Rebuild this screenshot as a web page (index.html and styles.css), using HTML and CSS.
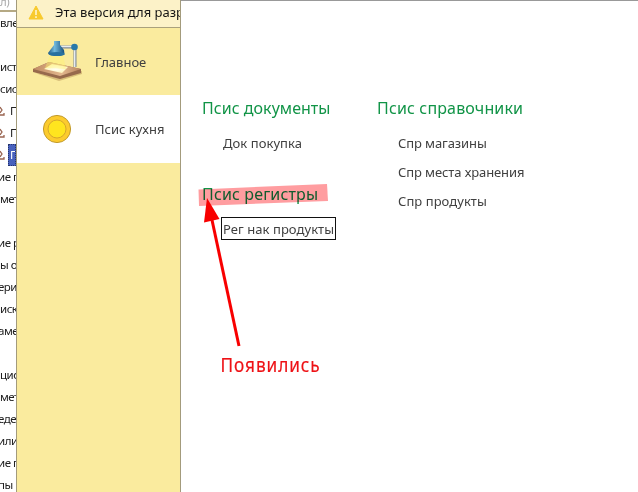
FILE: index.html
```html
<!DOCTYPE html>
<html lang="ru">
<head>
<meta charset="utf-8">
<title>Псис кухня</title>
<link rel="stylesheet" href="styles.css">
</head>
<body>
<div class="app">
  <aside class="tree">
    <div class="tree-head">л)</div>
    <div class="row">вле</div>
    <div class="row"></div>
    <div class="row">исте</div>
    <div class="row">сист</div>
    <div class="row leaf"><svg class="mark" viewBox="0 0 5 12"><path d="M0 2L2 5L0 8M0 10H4V8"/></svg><span>П</span></div>
    <div class="row leaf"><svg class="mark" viewBox="0 0 5 12"><path d="M0 2L2 5L0 8M0 10H4V8"/></svg><span>П</span></div>
    <div class="row leaf selected"><svg class="mark" viewBox="0 0 5 12"><path d="M0 2L2 5L0 8M0 10H4V8"/></svg><span>П</span></div>
    <div class="row cut">ие п</div>
    <div class="row">мет</div>
    <div class="row"></div>
    <div class="row cut">ие р</div>
    <div class="row">ы о</div>
    <div class="row cut">ери</div>
    <div class="row">иск</div>
    <div class="row cut">аме</div>
    <div class="row"></div>
    <div class="row">цио</div>
    <div class="row">мет</div>
    <div class="row cut">едел</div>
    <div class="row cut">или</div>
    <div class="row cut">ие п</div>
    <div class="row cut">пы</div>
  </aside>
  <nav class="nav">
    <div class="notice">
      <svg class="warn" viewBox="0 0 16 15"><path d="M8 1L15 14H1Z" fill="#f8ca2e" stroke="#f8ca2e" stroke-linejoin="round"/><path d="M8 5V10M8 11.3V13" stroke="#fff8d8" stroke-width="1.5"/></svg>
      <span>Эта версия для разработки</span>
    </div>
    <div class="section">
      <svg class="lamp" viewBox="0 0 52 42">
        <defs>
          <linearGradient id="shade"><stop offset="0" stop-color="#1b5785"/><stop offset=".4" stop-color="#71b9dc"/><stop offset="1" stop-color="#154e7d"/></linearGradient>
          <linearGradient id="wood"><stop offset="0" stop-color="#c08b63"/><stop offset=".6" stop-color="#e2b78d"/><stop offset="1" stop-color="#b98660"/></linearGradient>
          <radialGradient id="glow"><stop offset="0" stop-color="#fff"/><stop offset="1" stop-color="#fff6bd"/></radialGradient>
        </defs>
        <path d="M3 33L27 41L50 34V31L28 38Z" fill="#c9ab69" opacity=".7"/>
        <path d="M1 29L17 22L49 29V33L28 39L1 32Z" fill="#976a4c"/>
        <path d="M1 29L17 22L49 29L28 36Z" fill="url(#wood)"/>
        <path d="M12 29L20 24L36 27L30 33Z" fill="url(#glow)"/>
        <path d="M18 15L13 28L34 29L31 15Z" fill="#fff36b" opacity=".4"/>
        <path d="M27 7H42M43 9V27" fill="none" stroke="#7f8995" stroke-width="3"/>
        <path d="M28 6.500H42M42.700 9V27" fill="none" stroke="#e8edf0" stroke-width="1.400"/>
        <path d="M22 1H28V5L32 10Q34 16 25 16Q16 16 16 13L22 5Z" fill="url(#shade)"/>
        <ellipse cx="25" cy="14" rx="8" ry="2" fill="#28719f"/>
        <circle cx="42.500" cy="7" r="3.300" fill="#2879a9"/>
      </svg>
      <span>Главное</span>
    </div>
    <div class="section active">
      <svg class="coin" viewBox="0 0 30 30"><circle cx="15" cy="15" r="13.6" fill="#fccb2e" stroke="#c29b2d" stroke-width="1"/><circle cx="15" cy="15" r="9" fill="#ffe51f" stroke="#d6a82b" stroke-width="1"/></svg>
      <span>Псис кухня</span>
    </div>
  </nav>
  <main class="content">
    <div class="column">
      <h2 class="first">Псис документы</h2>
      <a>Док покупка</a>
      <h2 class="next">Псис регистры</h2>
      <a class="focused">Рег нак продукты</a>
    </div>
    <div class="column">
      <h2>Псис справочники</h2>
      <a class="tight">Спр магазины</a>
      <a class="tight">Спр места хранения</a>
      <a>Спр продукты</a>
    </div>
  </main>
  <svg class="annotation" viewBox="0 0 638 492">
    <path class="highlight" d="M198.5 189.5L327 184L328 201L199 206Z"/>
    <path d="M239 346L212 220" stroke="#f80000" stroke-width="3"/>
    <path d="M207 198L219.500 219L204 222.500Z" fill="#f80000"/>
    <text transform="translate(220.500 372) scale(.84 1)" textLength="118" lengthAdjust="spacing">Появились</text>
  </svg>
</div>
</body>
</html>
```
FILE: styles.css
```css
body { margin: 0; background: #fff; font-family: "Noto Sans", sans-serif; font-size: 13px; color: #404040; }
.app { position: relative; display: flex; width: 638px; height: 492px; overflow: hidden; }
.tree { width: 16px; flex: none; overflow: hidden; font-size: 11.5px; letter-spacing: -0.5px; color: #202020; }
.tree-head { height: 12px; line-height: 4px; border-bottom: 2px solid #b5a984; color: #aaa; box-sizing: border-box; }
.row { height: 22px; line-height: 22px; white-space: nowrap; }
.cut { text-indent: -2px; }
.leaf { display: flex; align-items: center; }
.mark { width: 5px; height: 12px; margin-right: 3px; flex: none; fill: none; stroke: #996450; stroke-width: 1.3; }
.leaf span { width: 8px; height: 22px; padding-left: 2px; box-sizing: border-box; flex: none; }
.selected span { background: #4861bd; color: #fff; outline: 1px dotted #26356d; outline-offset: -1px; }
.nav { width: 165px; flex: none; box-sizing: border-box; background: #faeb9e; border: solid #a39b7c; border-width: 0 1px; overflow: hidden; }
.notice { display: flex; align-items: center; height: 28px; box-sizing: border-box; padding: 0 0 3px 11px; background: #fcf2c8; border-bottom: 1px solid #aaa17c; color: #151515; white-space: nowrap; }
.warn { width: 16px; height: 15px; flex: none; margin-right: 11px; }
.section { display: flex; align-items: center; height: 68px; }
.section span { padding-bottom: 1px; }
.section:nth-child(2) { height: 67px; }
.section:nth-child(2) span { padding: 1px 0 0; }
.lamp { width: 52px; height: 42px; margin: 0 11px 2px 15px; }
.coin { width: 30px; height: 30px; margin: 0 23px 0 25px; }
.active { background: #fff; }
.content { display: flex; align-items: flex-start; flex: 1; box-sizing: border-box; border-top: 1px solid #999; padding: 96px 0 0 21px; }
.column { width: 175px; display: flex; flex-direction: column; align-items: flex-start; }
h2 { margin: 0 0 10px; font-size: 16px; font-weight: 400; line-height: 22px; letter-spacing: 0.15px; color: #119447; white-space: nowrap; }
.first { letter-spacing: 0.04px; }
.column a { margin-left: 21px; height: 29px; line-height: 28px; white-space: nowrap; letter-spacing: 0.06px; }
.column .tight { letter-spacing: -0.1px; }
.column .next { margin-top: 25px; }
.column .focused { height: 23px; line-height: 22px; box-sizing: border-box; border: 1px solid #111; margin: 2px 0 0 19px; padding: 0 1px; }
.annotation { position: absolute; inset: 0; width: 638px; height: 492px; pointer-events: none; }
.highlight { fill: #ff9da0; mix-blend-mode: multiply; }
.annotation text { font: 20.5px "Noto Sans", sans-serif; fill: #ee1115; stroke: #ee1115; stroke-width: .2px; }
```
